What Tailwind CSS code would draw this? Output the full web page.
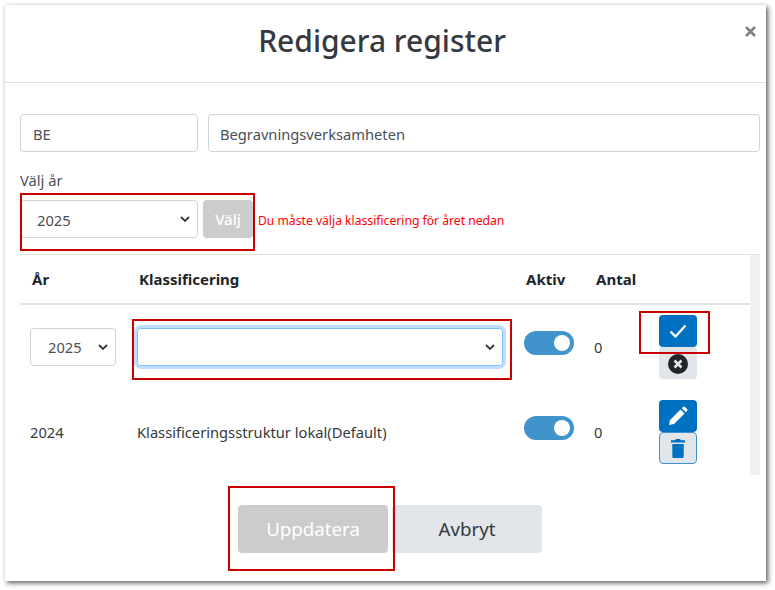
<!DOCTYPE html>
<html lang="sv">
<head>
    <meta charset="UTF-8">
    <title>Redigera register</title>
    <script src="https://cdn.jsdelivr.net/npm/@tailwindcss/browser@4"></script>
</head>
<body class="bg-white w-[775px] h-[590px] overflow-hidden font-['Noto_Sans',sans-serif] text-[#343a40]">
    <div class="relative ml-[5px] mt-[5px] w-[761px] h-[576px] bg-white shadow-[2px_2px_5px_rgba(0,0,0,0.65)]">

        <!-- header -->
        <div class="relative h-[78px] border-b border-[#dee2e6] flex items-center justify-center pr-[7px]">
            <h1 class="text-[30px] font-medium text-[#343a40] leading-none -mt-[5px]">Redigera register</h1>
            <span class="absolute right-[10px] top-[21px] text-[#808080]">
                <svg class="block" width="11" height="11" viewBox="0 0 11 11" stroke="currentColor" stroke-width="2.6"><path d="M1 1l9 9M10 1l-9 9"/></svg>
            </span>
        </div>

        <div class="pl-[15px] pr-[6px]">
            <!-- code + name -->
            <div class="flex gap-[10px] pt-[31px]">
                <div class="w-[178px] h-[38px] border border-[#ced4da] rounded-[4px] px-3 pt-[3px] flex items-center text-[14.7px] text-[#495057]">BE</div>
                <div class="flex-1 h-[38px] border border-[#ced4da] rounded-[4px] px-[11px] pt-[3px] flex items-center text-[14.7px] text-[#495057]">Begravningsverksamheten</div>
            </div>

            <!-- year -->
            <div class="mt-[18px] text-[14.7px] leading-5 text-[#495057]">Välj år</div>
            <div class="flex items-center mt-[10px]">
                <div class="w-[178px] h-[38px] border border-[#ced4da] rounded-[4px] pl-[16px] pr-[7px] flex items-center justify-between text-[14.7px] text-[#495057]">
                    <span class="pt-[3px]">2025</span>
                    <svg width="10" height="7" viewBox="0 0 10 7" fill="none" stroke="#343a40" stroke-width="1.8"><path d="M1 1l4 4 4-4"/></svg>
                </div>
                <button class="ml-[5px] w-[50px] h-[38px] rounded-[4px] bg-[#cccccc] text-white text-[15px] font-medium">Välj</button>
                <span class="ml-[5px] pt-[4px] text-[12.15px] text-[#ff0000]">Du måste välja klassificering för året nedan</span>
            </div>

            <!-- table -->
            <div class="mt-[16px] border-t border-[#dee2e6] h-[221px] flex w-[740px]">
                <div class="w-[730px]">
                    <div class="h-[50px] border-b-2 border-[#dee2e6] flex items-center text-[15px] font-bold text-[#212529]">
                        <span class="w-[119px] pl-[12px]">År</span>
                        <span class="w-[387px]">Klassificering</span>
                        <span class="w-[70px]">Aktiv</span>
                        <span>Antal</span>
                    </div>

                    <div class="h-[95px] flex text-[14.7px] text-[#343a40]">
                        <div class="w-[117px] pl-[10px] pt-[23px]">
                            <div class="w-[86px] h-[38px] border border-[#ced4da] rounded-[4px] pl-[17px] pr-[7px] flex items-center justify-between text-[#495057]">
                                <span class="pt-[1px]">2025</span>
                                <svg width="10" height="7" viewBox="0 0 10 7" fill="none" stroke="#343a40" stroke-width="1.8"><path d="M1 1l4 4 4-4"/></svg>
                            </div>
                        </div>
                        <div class="w-[387px] pt-[23px]">
                            <div class="w-[366px] h-[38px] border border-[#80bdff] rounded-[4px] shadow-[0_0_0_3px_rgba(0,123,255,0.25)] pr-[7px] flex items-center justify-end">
                                <svg width="10" height="7" viewBox="0 0 10 7" fill="none" stroke="#343a40" stroke-width="1.8"><path d="M1 1l4 4 4-4"/></svg>
                            </div>
                        </div>
                        <div class="w-[70px] pt-[26px]">
                            <div class="w-[50px] h-[24px] rounded-full bg-[#4193cc] relative">
                                <span class="absolute right-[4px] top-[4px] w-[16px] h-[16px] rounded-full bg-white"></span>
                            </div>
                        </div>
                        <div class="w-[65px] pt-[31px]">0</div>
                        <div class="w-[38px] pt-[10px] flex flex-col">
                            <button class="w-[38px] h-[32px] rounded-[4px] bg-[#0070c0] flex items-center justify-center">
                                <svg width="18" height="14" viewBox="0 0 18 14" fill="none" stroke="#fff" stroke-width="2.4"><path d="M1.5 7.5l5 5L16.5 1.5"/></svg>
                            </button>
                            <button class="w-[38px] h-[32px] rounded-[4px] bg-[#e2e5e9] relative">
                                <svg class="absolute left-[9px] top-[7px]" width="20" height="20" viewBox="0 0 20 20"><circle cx="10" cy="10" r="10" fill="#212529"/><path d="M6.5 6.5l7 7M13.5 6.5l-7 7" stroke="#e2e5e9" stroke-width="2.6"/></svg>
                            </button>
                        </div>
                    </div>

                    <div class="h-[74px] flex text-[14.7px] text-[#343a40]">
                        <div class="w-[117px] pl-[10px] pt-[21px]">2024</div>
                        <div class="w-[387px] pt-[21px]">Klassificeringsstruktur lokal(Default)</div>
                        <div class="w-[70px] pt-[16px]">
                            <div class="w-[50px] h-[24px] rounded-full bg-[#4193cc] relative">
                                <span class="absolute right-[4px] top-[4px] w-[16px] h-[16px] rounded-full bg-white"></span>
                            </div>
                        </div>
                        <div class="w-[65px] pt-[21px]">0</div>
                        <div class="w-[38px] flex flex-col">
                            <button class="w-[38px] h-[32px] rounded-[4px] bg-[#0070c0] flex items-center justify-center">
                                <svg width="20" height="20" viewBox="0 0 20 20" fill="#fff"><path d="M1 19l1-5L12.5 3.5l4 4L6 18zM13.8 2.2l1.2-1.2a1.4 1.4 0 0 1 2 0l2 2a1.4 1.4 0 0 1 0 2l-1.2 1.2z"/></svg>
                            </button>
                            <button class="w-[38px] h-[32px] rounded-[4px] bg-[#e2e5e9] border border-[#3f92cf] flex items-center justify-center">
                                <svg width="14" height="19" viewBox="0 0 16 19" fill="#0070c0" preserveAspectRatio="none"><path d="M5.5 0h5l.6 1.2H16v2.2H0V1.2h4.9zM1.5 5h13v12.4a1.6 1.6 0 0 1-1.6 1.6H3.1a1.6 1.6 0 0 1-1.6-1.6z"/></svg>
                            </button>
                        </div>
                    </div>
                </div>
                <div class="w-[10px] bg-[#f0f0f0]"></div>
            </div>

            <!-- footer buttons -->
            <div class="flex justify-center mt-[30px] w-[740px]">
                <button class="w-[150px] h-[48px] rounded-[4px] bg-[#cccccc] text-white text-[18.7px]">Uppdatera</button>
                <button class="ml-[4px] w-[150px] h-[48px] rounded-[4px] bg-[#e2e5e9] text-[#343a40] text-[18.7px]">Avbryt</button>
            </div>
        </div>

        <!-- red annotation boxes -->
        <div class="absolute left-[15px] top-[188px] w-[235px] h-[58px] border-2 border-[#c80000]"></div>
        <div class="absolute left-[127px] top-[314px] w-[380px] h-[61px] border-2 border-[#c80000]"></div>
        <div class="absolute left-[634px] top-[306px] w-[71px] h-[43px] border-2 border-[#c80000]"></div>
        <div class="absolute left-[223px] top-[481px] w-[167px] h-[85px] border-2 border-[#c80000]"></div>
    </div>
</body>
</html>
